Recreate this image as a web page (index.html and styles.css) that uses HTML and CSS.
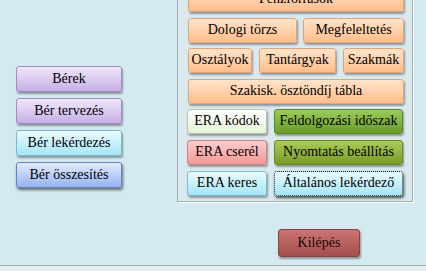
FILE: index.html
```html
<!DOCTYPE html>
<html>
<head>
  <meta charset="UTF-8">
  <title>Bérek</title>
  <link rel="stylesheet" href="styles.css">
</head>
<body>
  <div class="main">
    <!-- Bal oldali menü -->
    <div class="side">
      <div class="btn purple" role="button">Bérek</div>
      <div class="btn purple" role="button">Bér tervezés</div>
      <div class="btn cyan" role="button">Bér lekérdezés</div>
      <div class="btn blue" role="button">Bér összesítés</div>
    </div>

    <div class="right">
      <!-- Törzsadatok panel -->
      <div class="panel">
        <div class="row one"><div class="btn orange" role="button">Pénzforrások</div></div>
        <div class="row two">
          <div class="btn orange" role="button">Dologi törzs</div>
          <div class="btn orange" role="button">Megfeleltetés</div>
        </div>
        <div class="row three">
          <div class="btn orange" role="button">Osztályok</div>
          <div class="btn orange" role="button">Tantárgyak</div>
          <div class="btn orange" role="button">Szakmák</div>
        </div>
        <div class="row one"><div class="btn orange" role="button">Szakisk. ösztöndíj tábla</div></div>
        <div class="row era">
          <div class="btn white" role="button">ERA kódok</div>
          <div class="btn green" role="button">Feldolgozási időszak</div>
        </div>
        <div class="row era">
          <div class="btn pink" role="button">ERA cserél</div>
          <div class="btn olive" role="button">Nyomtatás beállítás</div>
        </div>
        <div class="row era">
          <div class="btn cyan" role="button">ERA keres</div>
          <div class="btn cyan focused" role="button">Általános lekérdező</div>
        </div>
      </div>

      <div class="btn exit" role="button">Kilépés</div>
    </div>
  </div>
  <div class="statusbar"></div>
</body>
</html>
```

FILE: styles.css
```css
/* Alap */
* {
  margin: 0;
  padding: 0;
  box-sizing: border-box;
}
html, body {
  width: 100%;
  height: 100%;
  overflow: hidden;
}
body {
  background: #d3eaf0;
  font-family: "Liberation Serif", serif;
  font-size: 14px;
  color: #000;
}
.main {
  display: flex;
  height: 265px;
}

/* Gombok */
.btn {
  display: flex;
  align-items: center;
  justify-content: center;
  height: 25px;
  padding-bottom: 1px;
  font-family: "Liberation Serif", serif;
  font-size: 14px;
  color: #000;
  white-space: nowrap;
  border: 1px solid #c89870;
  border-radius: 3px;
  box-shadow: 1px 2px 2px rgba(0, 0, 0, 0.35);
  cursor: pointer;
}
.btn.orange {
  background: linear-gradient(#ffe4cc, #ffbd8a);
  border-color: #e0a67a;
}
.btn.purple {
  background: linear-gradient(#f0e8fa, #c6afe8);
  border-color: #9c8cc0;
}
.btn.cyan {
  background: linear-gradient(#eafbff, #a5e5f7);
  border-color: #7cb8cc;
}
.btn.blue {
  background: linear-gradient(#e2eaff, #96b2f0);
  border-color: #6a80c0;
  box-shadow: 1px 2px 3px rgba(0, 0, 0, 0.55);
}
.btn.white {
  background: linear-gradient(#ffffff, #e4f2d6);
  border-color: #b6c6a6;
}
.btn.green {
  background: linear-gradient(#9ccc5c, #689c26);
  border-color: #5a8a22;
}
.btn.olive {
  background: linear-gradient(#accb5a, #7a9c26);
  border-color: #6a8a22;
}
.btn.pink {
  background: linear-gradient(#ffcccc, #f29898);
  border-color: #d08282;
}
.btn.focused {
  border: 1px dotted #1c2c38;
  box-shadow: 1px 2px 3px rgba(0, 0, 0, 0.7);
}
.btn.exit {
  width: 82px;
  height: 28px;
  margin: 27px 0 0 101px;
  background: linear-gradient(#cc7474, #a44e4e);
  border-color: #8e4040;
  color: #1a0808;
}

/* Bal oszlop */
.side {
  display: flex;
  flex-direction: column;
  gap: 6px;
  width: 177px;
  padding: 66px 0 0 16px;
}
.side .btn {
  width: 106px;
  height: 26px;
}

/* Panel */
.right {
  width: 236px;
}
.panel {
  margin-top: -24px;
  height: 226px;
  padding: 10px 8px 0 10px;
  display: flex;
  flex-direction: column;
  gap: 5.6px;
  background: #dae9ee;
  border: 1px solid #a4adb2;
  box-shadow: 1px 1px 0 #ffffff;
}
.row {
  display: grid;
  height: 25px;
}
.row .btn {
  height: 100%;
}
.row.one { grid-template-columns: 1fr; }
.row.two { grid-template-columns: 109px 101px; gap: 6px; }
.row.three { grid-template-columns: 64px 77px 61px; gap: 7px; }
.row.era { grid-template-columns: 80px 129px; gap: 7px; margin-left: -1px; }

/* Állapotsor */
.statusbar {
  height: 6px;
  border-top: 1px solid #a8b0b4;
  background: #e6eef0;
}
```
